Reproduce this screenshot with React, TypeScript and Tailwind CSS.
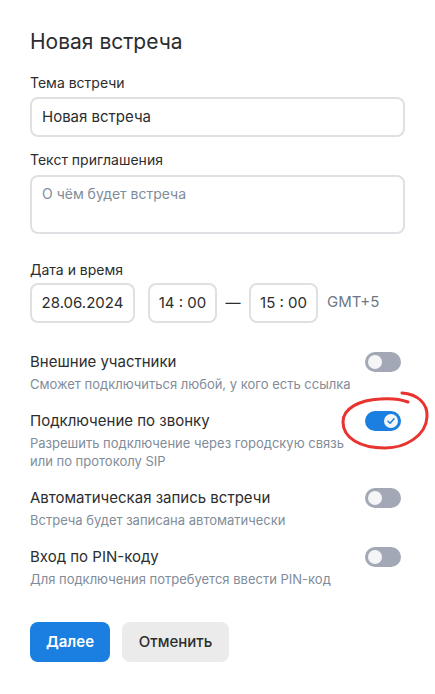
import React from "react";

function Toggle({ on }: { on?: boolean }) {
  return (
    <div
      className={
        on
          ? "w-[36px] h-[20px] rounded-full bg-[#1a7fe0] flex items-center justify-end px-[3px] shrink-0"
          : "w-[36px] h-[20px] rounded-full bg-[#a2a8b5] flex items-center justify-start px-[3px] shrink-0"
      }
    >
      <div className="w-[14px] h-[14px] rounded-full bg-[#f4f5f7] flex items-center justify-center">
        {on && (
          <svg width="10" height="10" viewBox="0 0 10 10" fill="none">
            <path d="M2 5.2 L4.1 7.2 L8 2.8" stroke="#1a7fe0" strokeWidth="1.5" strokeLinecap="round" strokeLinejoin="round" />
          </svg>
        )}
      </div>
    </div>
  );
}

function OptionRow({ title, desc, on }: { title: string; desc: React.ReactNode; on?: boolean }) {
  return (
    <div className="flex justify-between">
      <div className="flex flex-col">
        <div className="text-[15px] leading-[20px] text-[#2c2d2e]">{title}</div>
        <div className="mt-[3px] text-[13px] leading-[18px] text-[#818c99]">{desc}</div>
      </div>
      <div className="pl-[4px] pr-[4px]">
        <Toggle on={on} />
      </div>
    </div>
  );
}

export default function App() {
  return (
    <div
      className="relative w-[435px] h-[694px] bg-white px-[30px] pt-[28px]"
      style={{ fontFamily: "Inter, 'Noto Sans', sans-serif" }}
    >
      <div className="text-[21px] leading-[28px] text-[#2c2d2e]">Новая встреча</div>

      <div className="mt-[17px] text-[14px] leading-[20px] text-[#2c2d2e]">Тема встречи</div>
      <div className="mt-[4px] h-[40px] rounded-[8px] border-2 border-[#dfe0e3] flex items-center px-[10px] text-[15px] text-[#2c2d2e]">
        Новая встреча
      </div>

      <div className="mt-[13px] text-[14px] leading-[20px] text-[#2c2d2e]">Текст приглашения</div>
      <div className="mt-[5px] h-[59px] rounded-[8px] border-2 border-[#dfe0e3] px-[10px] pt-[7px] text-[14px] leading-[20px] text-[#818c99]">
        О чём будет встреча
      </div>

      <div className="mt-[26px] text-[14px] leading-[20px] text-[#2c2d2e]">Дата и время</div>
      <div className="mt-[3px] flex items-center">
        <div className="w-[105px] h-[40px] rounded-[8px] border-2 border-[#dfe0e3] flex items-center justify-center text-[15px] text-[#2c2d2e]">
          28.06.2024
        </div>
        <div className="ml-[13px] w-[69px] h-[40px] rounded-[8px] border-2 border-[#dfe0e3] flex items-center justify-center text-[15px] text-[#2c2d2e]">
          14 : 00
        </div>
        <div className="w-[32px] text-center text-[15px] text-[#2c2d2e]">—</div>
        <div className="w-[69px] h-[40px] rounded-[8px] border-2 border-[#dfe0e3] flex items-center justify-center text-[15px] text-[#2c2d2e]">
          15 : 00
        </div>
        <div className="ml-[9px] text-[15px] text-[#6d7885] -mt-[2px]">GMT+5</div>
      </div>

      <div className="mt-[29px] flex flex-col gap-[18px]">
        <OptionRow title="Внешние участники" desc="Сможет подключиться любой, у кого есть ссылка" />
        <OptionRow
          title="Подключение по звонку"
          desc={
            <>
              Разрешить подключение через городскую связь
              <br />
              или по протоколу SIP
            </>
          }
          on
        />
        <OptionRow title="Автоматическая запись встречи" desc="Встреча будет записана автоматически" />
        <OptionRow title="Вход по PIN-коду" desc="Для подключения потребуется ввести PIN-код" />
      </div>

      <div className="mt-[34px] flex gap-[12px]">
        <button className="w-[80px] h-[40px] rounded-[8px] bg-[#1a7fe0] text-white text-[15px] font-semibold">
          Далее
        </button>
        <button className="w-[107px] h-[40px] rounded-[8px] bg-[#ebebeb] text-[#2c2d2e] text-[15px] font-medium">
          Отменить
        </button>
      </div>

      <svg
        className="absolute left-[340px] top-[386px]"
        width="95"
        height="68"
        viewBox="0 0 95 68"
        fill="none"
      >
        <path
          d="M62 7 C78 8 88 18 87 31 C86 50 65 62 45 62 C20 62 3 52 3 36 C3 22 20 14 40 13 C52 12 60 13 68 16"
          stroke="#e8332f"
          strokeWidth="3"
          strokeLinecap="round"
        />
      </svg>
    </div>
  );
}
